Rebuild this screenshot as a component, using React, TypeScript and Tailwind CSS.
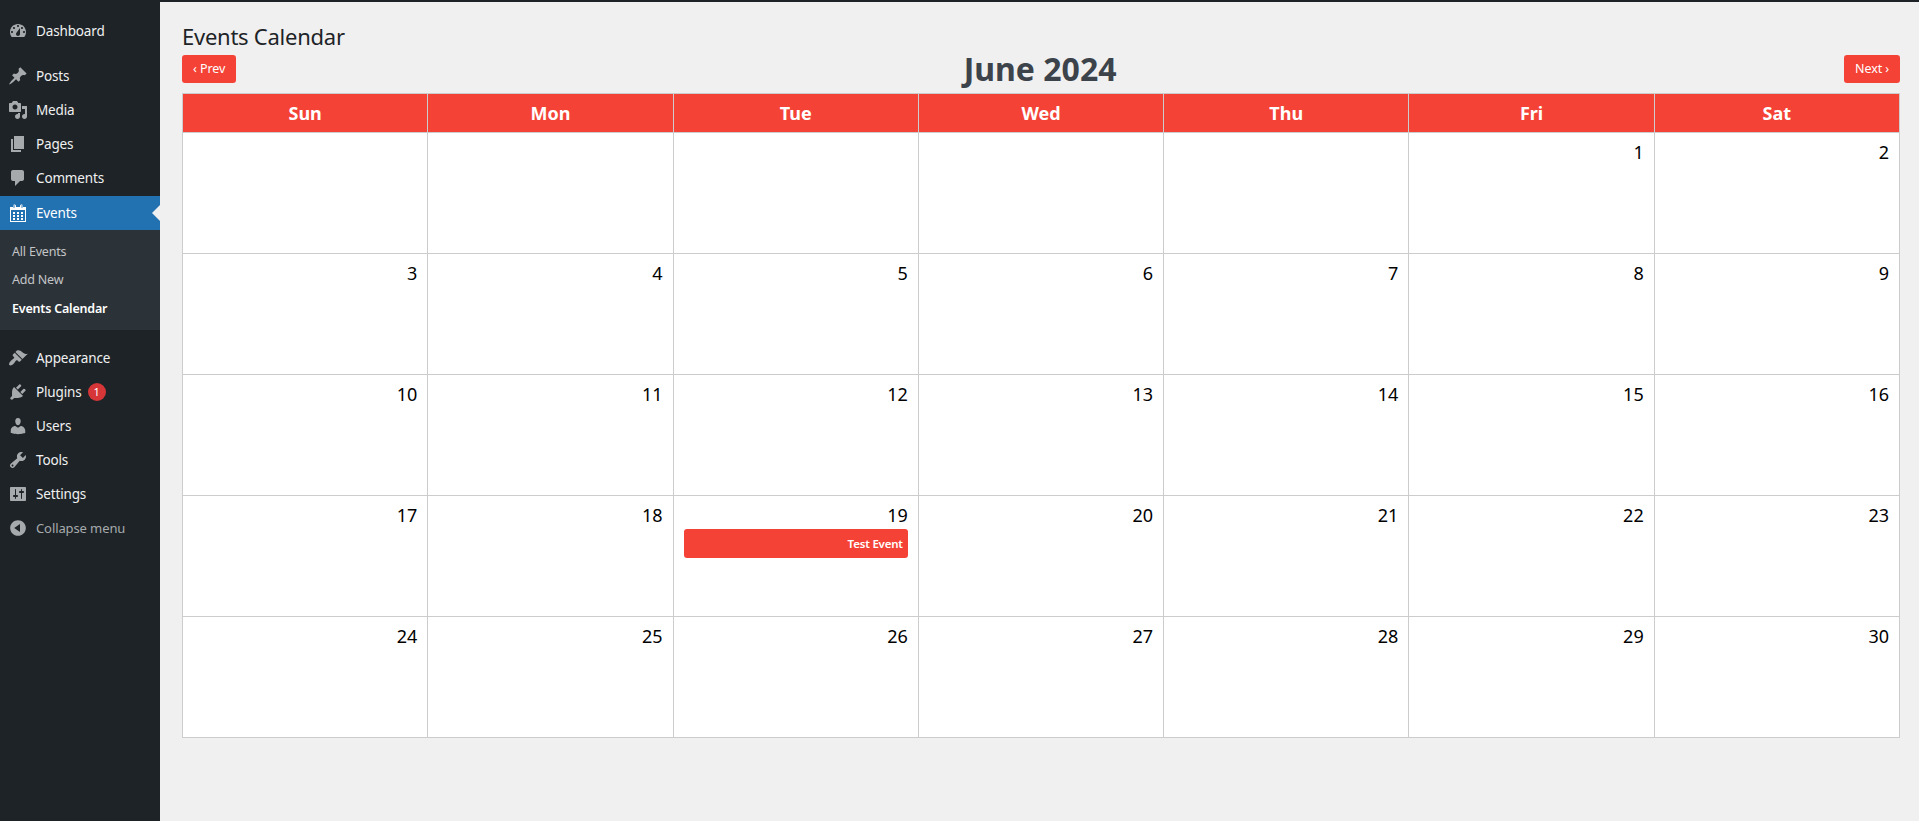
import React from "react"

const paths = {
  dashboard: "M3.76 16h12.48c1.1-1.37 1.76-3.11 1.76-5 0-4.42-3.58-8-8-8s-8 3.58-8 8c0 1.89.66 3.63 1.76 5zM10 4c.55 0 1 .45 1 1s-.45 1-1 1-1-.45-1-1 .45-1 1-1zM6 6c.55 0 1 .45 1 1s-.45 1-1 1-1-.45-1-1 .45-1 1-1zm8 0c.55 0 1 .45 1 1s-.45 1-1 1-1-.45-1-1 .45-1 1-1zm-5.37 5.55L12 7v6c0 1.1-.9 2-2 2s-2-.9-2-2c0-.57.24-1.08.63-1.45zM4 10c.55 0 1 .45 1 1s-.45 1-1 1-1-.45-1-1 .45-1 1-1zm12 0c.55 0 1 .45 1 1s-.45 1-1 1-1-.45-1-1 .45-1 1-1z",
  posts: "M10.44 3.02l1.82-1.82 6.36 6.35-1.83 1.82c-1.05-.68-2.48-.57-3.41.36l-.75.75c-.92.93-1.04 2.35-.35 3.41l-1.83 1.82-2.41-2.41-2.8 2.79c-.42.42-3.38 2.71-3.8 2.29s1.86-3.39 2.28-3.81l2.79-2.79L4.1 9.36l1.83-1.82c1.05.69 2.48.57 3.4-.36l.75-.75c.93-.92 1.05-2.35.36-3.41z",
  media: "M13 11V4c0-.55-.45-1-1-1h-1.67L9 1H5L3.67 3H2c-.55 0-1 .45-1 1v7c0 .55.45 1 1 1h10c.55 0 1-.45 1-1zM7 4.5c1.38 0 2.5 1.12 2.5 2.5S8.38 9.5 7 9.5 4.5 8.38 4.5 7 5.62 4.5 7 4.5zM14 6h5v10.5c0 1.38-1.12 2.5-2.5 2.5S14 17.88 14 16.5s1.12-2.5 2.5-2.5c.17 0 .34.02.5.05V9h-3V6zm-4 8.05V13h2v3.5c0 1.38-1.12 2.5-2.5 2.5S7 17.88 7 16.5 8.12 14 9.5 14c.17 0 .34.02.5.05z",
  pages: "M6 15V2h10v13H6zm-1 1h8v2H3V5h2v11z",
  comments: "M5 2h9c1.1 0 2 .9 2 2v7c0 1.1-.9 2-2 2h-2l-5 5v-5H5c-1.1 0-2-.9-2-2V4c0-1.1.9-2 2-2z",
  events: "M15 4h3v15H2V4h3V3c0-.41.15-.76.44-1.06.29-.29.65-.44 1.06-.44s.77.15 1.06.44c.29.3.44.65.44 1.06v1h4V3c0-.41.15-.76.44-1.06.29-.29.65-.44 1.06-.44s.77.15 1.06.44c.29.3.44.65.44 1.06v1zM6 5c.28 0 .5-.22.5-.5v-2c0-.28-.22-.5-.5-.5s-.5.22-.5.5v2c0 .28.22.5.5.5zm8 0c.28 0 .5-.22.5-.5v-2c0-.28-.22-.5-.5-.5s-.5.22-.5.5v2c0 .28.22.5.5.5zm3 13V7H3v11h14zM7 9v2H5V9h2zm2 0h2v2H9V9zm4 2V9h2v2h-2zm-6 1v2H5v-2h2zm2 0h2v2H9v-2zm4 2v-2h2v2h-2zm-6 1v2H5v-2h2zm4 2H9v-2h2v2zm4 0h-2v-2h2v2z",
  appearance: "M14.48 11.06L7.41 3.99l1.5-1.5c.5-.56 2.3-.47 3.51.32 1.21.8 1.43 1.28 2.91 2.1 1.18.64 2.45 1.26 4.45.85zm-.71.71L6.7 4.7 4.93 6.47c-.39.39-.39 1.02 0 1.41l1.06 1.06c.39.39.39 1.03 0 1.42-.6.6-1.43 1.11-2.21 1.69-.35.26-.7.53-1.01.84C1.43 14.23.4 16.08 1.4 17.07c.99 1 2.84-.03 4.18-1.36.31-.31.58-.66.85-1.02.57-.78 1.08-1.61 1.69-2.21.39-.39 1.02-.39 1.41 0l1.06 1.06c.39.39 1.02.39 1.41 0z",
  plugins: "M13.11 4.36L9.87 7.6 8 5.73l3.24-3.24c.35-.34 1.05-.2 1.56.32.52.51.66 1.21.31 1.55zm-8 1.77l.91-1.12 9.01 9.01-1.19.84c-.71.71-2.63 1.16-3.82 1.16H6.14L4.9 17.26c-.59.59-1.54.59-2.12 0-.59-.58-.59-1.53 0-2.12l1.24-1.24v-3.88c0-1.13.4-3.19 1.09-3.89zm7.26 3.97l3.24-3.24c.34-.35 1.04-.21 1.55.31.52.51.66 1.21.31 1.55l-3.24 3.25z",
  users: "M10 9.25c-2.27 0-2.73-3.44-2.73-3.44C7 4.02 7.82 2 9.97 2c2.16 0 2.98 2.02 2.71 3.81 0 0-.41 3.44-2.68 3.44zm0 2.57L12.72 10c2.39 0 4.52 2.33 4.52 4.53v2.49s-3.65 1.13-7.24 1.13c-3.65 0-7.24-1.13-7.24-1.13v-2.49c0-2.25 1.94-4.48 4.47-4.48z",
  tools: "M16.68 9.77c-1.34 1.34-3.3 1.67-4.95.99l-5.41 6.52c-.99.99-2.59.99-3.58 0s-.99-2.59 0-3.57l6.52-5.42c-.68-1.65-.35-3.61.99-4.95 1.28-1.28 3.12-1.62 4.72-1.06l-2.89 2.89 2.82 2.82 2.86-2.87c.53 1.58.18 3.39-1.08 4.65zM3.81 16.21c.4.39 1.04.39 1.43 0 .4-.4.4-1.04 0-1.43-.39-.4-1.03-.4-1.43 0-.39.39-.39 1.03 0 1.43z",
  settings: "M18 16V4c0-.55-.45-1-1-1H3c-.55 0-1 .45-1 1v12c0 .55.45 1 1 1h14c.55 0 1-.45 1-1zM8 11h1c.55 0 1 .45 1 1s-.45 1-1 1H8v1.5c0 .28-.22.5-.5.5s-.5-.22-.5-.5V13H6c-.55 0-1-.45-1-1s.45-1 1-1h1V5.5c0-.28.22-.5.5-.5s.5.22.5.5V11zm5-2h-1c-.55 0-1-.45-1-1s.45-1 1-1h1V5.5c0-.28.22-.5.5-.5s.5.22.5.5V7h1c.55 0 1 .45 1 1s-.45 1-1 1h-1v5.5c0 .28-.22.5-.5.5s-.5-.22-.5-.5V9z",
  collapse: "M10 2.16c4.33 0 7.84 3.51 7.84 7.84s-3.51 7.84-7.84 7.84S2.16 14.33 2.16 10 5.71 2.16 10 2.16zm2 11.72V6.12L6.18 9.97z",
}

type IconName = keyof typeof paths

function MenuIcon({ name, active }: { name: IconName; active?: boolean }) {
  return (
    <svg viewBox="0 0 20 20" className={`w-5 h-5 shrink-0 ${active ? "fill-white" : "fill-[#a7aaad]"}`}>
      <path d={paths[name]} />
    </svg>
  )
}

function MenuItem({ name, label, active, badge }: { name: IconName; label: string; active?: boolean; badge?: string }) {
  return (
    <a className={`relative flex items-center h-[34px] pl-[8px] text-[13.5px] tracking-[-0.15px] ${active ? "bg-[#2271b1] text-white" : "text-[#f0f0f1]"}`}>
      <MenuIcon name={name} active={active} />
      <span className="ml-[8px]">{label}</span>
      {badge && (
        <span className="ml-[6px] flex items-center justify-center w-[18px] h-[18px] rounded-full bg-[#d63638] text-white text-[11px]">
          {badge}
        </span>
      )}
      {active && (
        <span className="absolute right-0 top-[9px] border-y-[8px] border-r-[8px] border-y-transparent border-r-[#f0f0f0]" />
      )}
    </a>
  )
}

function Sidebar() {
  return (
    <aside className="w-[160px] shrink-0 bg-[#1d2327] pt-[12px]">
      <MenuItem name="dashboard" label="Dashboard" />
      <div className="h-[11px]" />
      <MenuItem name="posts" label="Posts" />
      <MenuItem name="media" label="Media" />
      <MenuItem name="pages" label="Pages" />
      <MenuItem name="comments" label="Comments" />
      <div className="mt-[1px]">
        <MenuItem name="events" label="Events" active />
      </div>
      <ul className="h-[100px] bg-[#2c3338] pt-[8px] text-[12.5px] tracking-[-0.2px] text-[#c3c4c7]">
        <li className="h-[28px] pl-[12px] flex items-center pt-[1px]">All Events</li>
        <li className="h-[29px] pl-[12px] flex items-center">Add New</li>
        <li className="h-[29px] pl-[12px] flex items-center font-semibold text-white">Events Calendar</li>
      </ul>
      <div className="h-[11px]" />
      <MenuItem name="appearance" label="Appearance" />
      <MenuItem name="plugins" label="Plugins" badge="1" />
      <MenuItem name="users" label="Users" />
      <MenuItem name="tools" label="Tools" />
      <MenuItem name="settings" label="Settings" />
      <div className="flex items-center h-[34px] pl-[8px] text-[13px] tracking-[-0.1px] text-[#a7aaad]">
        <MenuIcon name="collapse" />
        <span className="ml-[8px] translate-y-[1px]">Collapse menu</span>
      </div>
    </aside>
  )
}

const days = ["Sun", "Mon", "Tue", "Wed", "Thu", "Fri", "Sat"]
const weeks: (number | null)[][] = [
  [null, null, null, null, null, 1, 2],
  [3, 4, 5, 6, 7, 8, 9],
  [10, 11, 12, 13, 14, 15, 16],
  [17, 18, 19, 20, 21, 22, 23],
  [24, 25, 26, 27, 28, 29, 30],
]

function NavButton({ children }: { children: React.ReactNode }) {
  return (
    <button className="h-[28px] px-[11px] rounded-[3px] bg-[#f44336] text-white text-[12.5px] tracking-[-0.1px]">{children}</button>
  )
}

function Calendar() {
  return (
    <table className="w-full table-fixed border-collapse">
      <thead>
        <tr>
          {days.map((d) => (
            <th key={d} className="h-[39px] border border-[#ccc] bg-[#f44336] text-white text-[18px] font-bold text-center p-0">
              {d}
            </th>
          ))}
        </tr>
      </thead>
      <tbody>
        {weeks.map((week, i) => (
          <tr key={i}>
            {week.map((day, j) => (
              <td key={j} className="h-[121px] border border-[#ccc] bg-white align-top text-right pt-[7px] px-[10px] text-[18px] leading-[24px] text-black">
                {day}
                {day === 19 && (
                  <div className="mt-[2px] h-[29px] rounded-[3px] bg-[#f44336] pr-[5px] text-white text-[11.5px] tracking-[-0.2px] font-semibold leading-[29px]">
                    Test Event
                  </div>
                )}
              </td>
            ))}
          </tr>
        ))}
      </tbody>
    </table>
  )
}

export default function App() {
  return (
    <div className="h-[821px] overflow-hidden flex flex-col bg-[#f0f0f0] font-['Noto_Sans',sans-serif]">
      <div className="h-[2px] bg-[#1d2327]" />
      <div className="flex flex-1">
        <Sidebar />
        <main className="flex-1 pl-[22px] pr-[19px] pt-[20px]">
          <h1 className="text-[22px] tracking-[-0.25px] leading-[29px] text-[#1d2327]">Events Calendar</h1>
          <div className="mt-[4px] mb-[10px] flex items-center justify-between h-[28px]">
            <NavButton>‹ Prev</NavButton>
            <h2 className="text-[32px] font-bold text-[#3c434a]">June 2024</h2>
            <NavButton>Next ›</NavButton>
          </div>
          <Calendar />
        </main>
      </div>
    </div>
  )
}
